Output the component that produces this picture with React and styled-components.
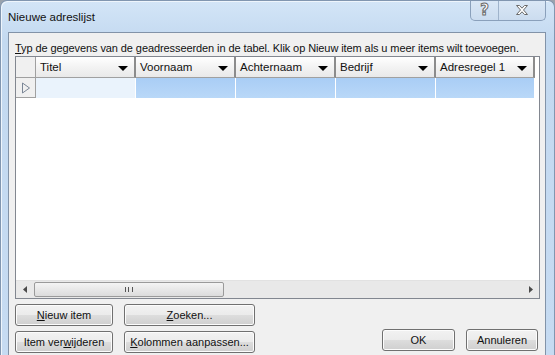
import styled, { createGlobalStyle } from "styled-components";

const GlobalStyle = createGlobalStyle`
  html, body {
    margin: 0;
    padding: 0;
    background: #9aa3ad;
    font-family: "Liberation Sans", Arial, sans-serif;
  }
`;

const columns = ["Titel", "Voornaam", "Achternaam", "Bedrijf", "Adresregel 1"];

const App = () => {
  return (
    <>
      <GlobalStyle />
      <Window>
        <TitleBar>
          <Title>Nieuwe adreslijst</Title>
          <Controls>
            <ControlButton $w={27}>
              <Help>?</Help>
            </ControlButton>
            <ControlButton $w={46}>
              <svg width="14" height="12" viewBox="0 0 14 12">
                <path
                  d="M1.5 1.5 h3 l2.5 2.7 l2.5 -2.7 h3 l-4 4.5 l4 4.5 h-3 l-2.5 -2.7 l-2.5 2.7 h-3 l4 -4.5 z"
                  fill="#fff"
                  stroke="#6a6a6a"
                  strokeWidth="1"
                  strokeLinejoin="round"
                />
              </svg>
            </ControlButton>
          </Controls>
        </TitleBar>

        <Client>
          <Intro>
            <u>T</u>yp de gegevens van de geadresseerden in de tabel. Klik op Nieuw item als u
            meer items wilt toevoegen.
          </Intro>

          <Table>
            <HeaderRow>
              <Corner />
              {columns.map((col) => (
                <HeaderCell key={col}>
                  <span>{col}</span>
                  <DropArrow />
                </HeaderCell>
              ))}
            </HeaderRow>
            <DataRow>
              <RowSelector>
                <svg width="10" height="12" viewBox="0 0 10 12">
                  <path d="M1.5 1 L8.5 6 L1.5 11 Z" fill="none" stroke="#7a8696" strokeWidth="1" />
                </svg>
              </RowSelector>
              {columns.map((col, i) => (
                <DataCell key={col} $active={i === 0} />
              ))}
            </DataRow>
            <Filler />
            <HScroll>
              <ScrollArrow>
                <svg width="5" height="7" viewBox="0 0 5 7">
                  <path d="M4 0 L0 3.5 L4 7 Z" fill="#4a4a4a" />
                </svg>
              </ScrollArrow>
              <ScrollThumb>
                <Grip />
              </ScrollThumb>
              <ScrollTrack />
              <ScrollArrow>
                <svg width="5" height="7" viewBox="0 0 5 7">
                  <path d="M1 0 L5 3.5 L1 7 Z" fill="#4a4a4a" />
                </svg>
              </ScrollArrow>
            </HScroll>
          </Table>

          <Footer>
            <LeftButtons>
              <Button $w={98}>
                <u>N</u>ieuw item
              </Button>
              <Button $w={131}>
                <u>Z</u>oeken...
              </Button>
              <Button $w={98}>
                Item ver<u>w</u>ijderen
              </Button>
              <Button $w={131}>
                <u>K</u>olommen aanpassen...
              </Button>
            </LeftButtons>
            <RightButtons>
              <Button $w={73}>OK</Button>
              <Button $w={72}>Annuleren</Button>
            </RightButtons>
          </Footer>
        </Client>
      </Window>
    </>
  );
};

export default App;

const Window = styled.div`
  width: 555px;
  height: 355px;
  box-sizing: border-box;
  display: flex;
  flex-direction: column;
  background: linear-gradient(#d3e5f7, #c3d9f0 40px, #c6dbf2);
  border-radius: 7px 7px 0 0;
  border: 1px solid #8196b0;
  border-bottom: none;
  overflow: hidden;
  box-shadow: inset 1px 1px 0 #eef5fc;
`;

const TitleBar = styled.div`
  height: 31px;
  flex-shrink: 0;
  display: flex;
  justify-content: space-between;
  align-items: flex-start;
  padding-left: 7px;
`;

const Title = styled.div`
  font-size: 11.5px;
  color: #111;
  margin-top: 10px;
`;

const Controls = styled.div`
  display: flex;
  margin-right: 8px;
  margin-top: -1px;
  border: 1px solid #8aa0bb;
  border-top: none;
  border-radius: 0 0 5px 5px;
  background: linear-gradient(#dbe8f6, #cbdcef);
  overflow: hidden;
  height: 20px;
`;

const ControlButton = styled.div`
  width: ${(p) => p.$w}px;
  display: flex;
  align-items: center;
  justify-content: center;
  & + & {
    border-left: 1px solid #9fb3cb;
  }
`;

const Help = styled.span`
  font-family: "DejaVu Sans", sans-serif;
  font-weight: bold;
  font-size: 15px;
  color: #fff;
  -webkit-text-stroke: 1px #6a6a6a;
  line-height: 1;
`;

const Client = styled.div`
  flex: 1;
  margin: 0 8px 0 7px;
  background: #f0f0f0;
  border: 1px solid #8293a8;
  border-bottom: none;
  display: flex;
  flex-direction: column;
  padding: 0 7px 0 6px;
`;

const Intro = styled.div`
  font-size: 11px;
  letter-spacing: -0.09px;
  color: #111;
  margin-top: 8px;
  height: 14px;
  line-height: 14px;
  white-space: nowrap;
`;

const Table = styled.div`
  margin-top: 1px;
  width: 525px;
  height: 243px;
  box-sizing: border-box;
  border: 1px solid #828790;
  background: #fff;
  display: flex;
  flex-direction: column;
`;

const HeaderRow = styled.div`
  display: flex;
  height: 21px;
  flex-shrink: 0;
`;

const Corner = styled.div`
  width: 20px;
  box-sizing: border-box;
  background: #f0f0f0;
  border-right: 1px solid #a0a0a0;
  border-bottom: 1px solid #a0a0a0;
`;

const HeaderCell = styled.div`
  width: 100px;
  box-sizing: border-box;
  display: flex;
  align-items: center;
  justify-content: space-between;
  padding: 0 6px 0 4px;
  font-size: 11.5px;
  color: #111;
  background: linear-gradient(#ffffff, #f3f3f3 50%, #e9e9e9);
  border-right: 2px solid #8c8c8c;
  border-bottom: 1px solid #a0a0a0;
  &:last-child {
    width: 99px;
  }
`;

const DropArrow = styled.span`
  width: 0;
  height: 0;
  border-left: 5px solid transparent;
  border-right: 5px solid transparent;
  border-top: 5px solid #000;
  margin-top: 2px;
`;

const DataRow = styled.div`
  display: flex;
  height: 20px;
  flex-shrink: 0;
`;

const RowSelector = styled.div`
  width: 20px;
  box-sizing: border-box;
  background: #f0f0f0;
  border-right: 1px solid #a0a0a0;
  border-bottom: 1px solid #a0a0a0;
  display: flex;
  align-items: center;
  justify-content: center;
`;

const DataCell = styled.div`
  width: 100px;
  box-sizing: border-box;
  border-right: 1px solid #fff;
  background: ${(p) =>
    p.$active ? "#eaf3fc" : "linear-gradient(#a9cdf5, #b9d8f8)"};
  &:last-child {
    width: 99px;
  }
`;

const Filler = styled.div`
  flex: 1;
  background: #fff;
`;

const HScroll = styled.div`
  height: 17px;
  flex-shrink: 0;
  display: flex;
  align-items: stretch;
  background: #e9e9e9;
  border-top: 1px solid #e2e2e2;
`;

const ScrollArrow = styled.div`
  width: 18px;
  display: flex;
  align-items: center;
  justify-content: center;
`;

const ScrollThumb = styled.div`
  width: 190px;
  margin: 1px 0;
  box-sizing: border-box;
  border: 1px solid #9a9a9a;
  border-radius: 2px;
  background: linear-gradient(#f4f4f4, #dcdcdc);
  display: flex;
  align-items: center;
  justify-content: center;
`;

const Grip = styled.span`
  width: 6px;
  height: 5px;
  border-left: 1px solid #555;
  border-right: 1px solid #555;
  position: relative;
  &::after {
    content: "";
    position: absolute;
    left: 2px;
    top: 0;
    height: 5px;
    border-left: 1px solid #555;
  }
`;

const ScrollTrack = styled.div`
  flex: 1;
`;

const Footer = styled.div`
  display: flex;
  justify-content: space-between;
  align-items: flex-end;
  margin-top: 5px;
`;

const LeftButtons = styled.div`
  display: grid;
  grid-template-columns: 98px 131px;
  column-gap: 11px;
  row-gap: 5px;
`;

const RightButtons = styled.div`
  display: flex;
  gap: 11px;
  padding-bottom: 2px;
`;

const Button = styled.div`
  width: ${(p) => p.$w}px;
  height: 22px;
  box-sizing: border-box;
  border: 1px solid #707070;
  border-radius: 3px;
  background: linear-gradient(#f2f2f2, #ebebeb 50%, #dddddd 51%, #cfcfcf);
  box-shadow: inset 0 0 0 1px #fcfcfc;
  display: flex;
  align-items: center;
  justify-content: center;
  font-size: 11px;
  color: #111;
  white-space: nowrap;
`;
